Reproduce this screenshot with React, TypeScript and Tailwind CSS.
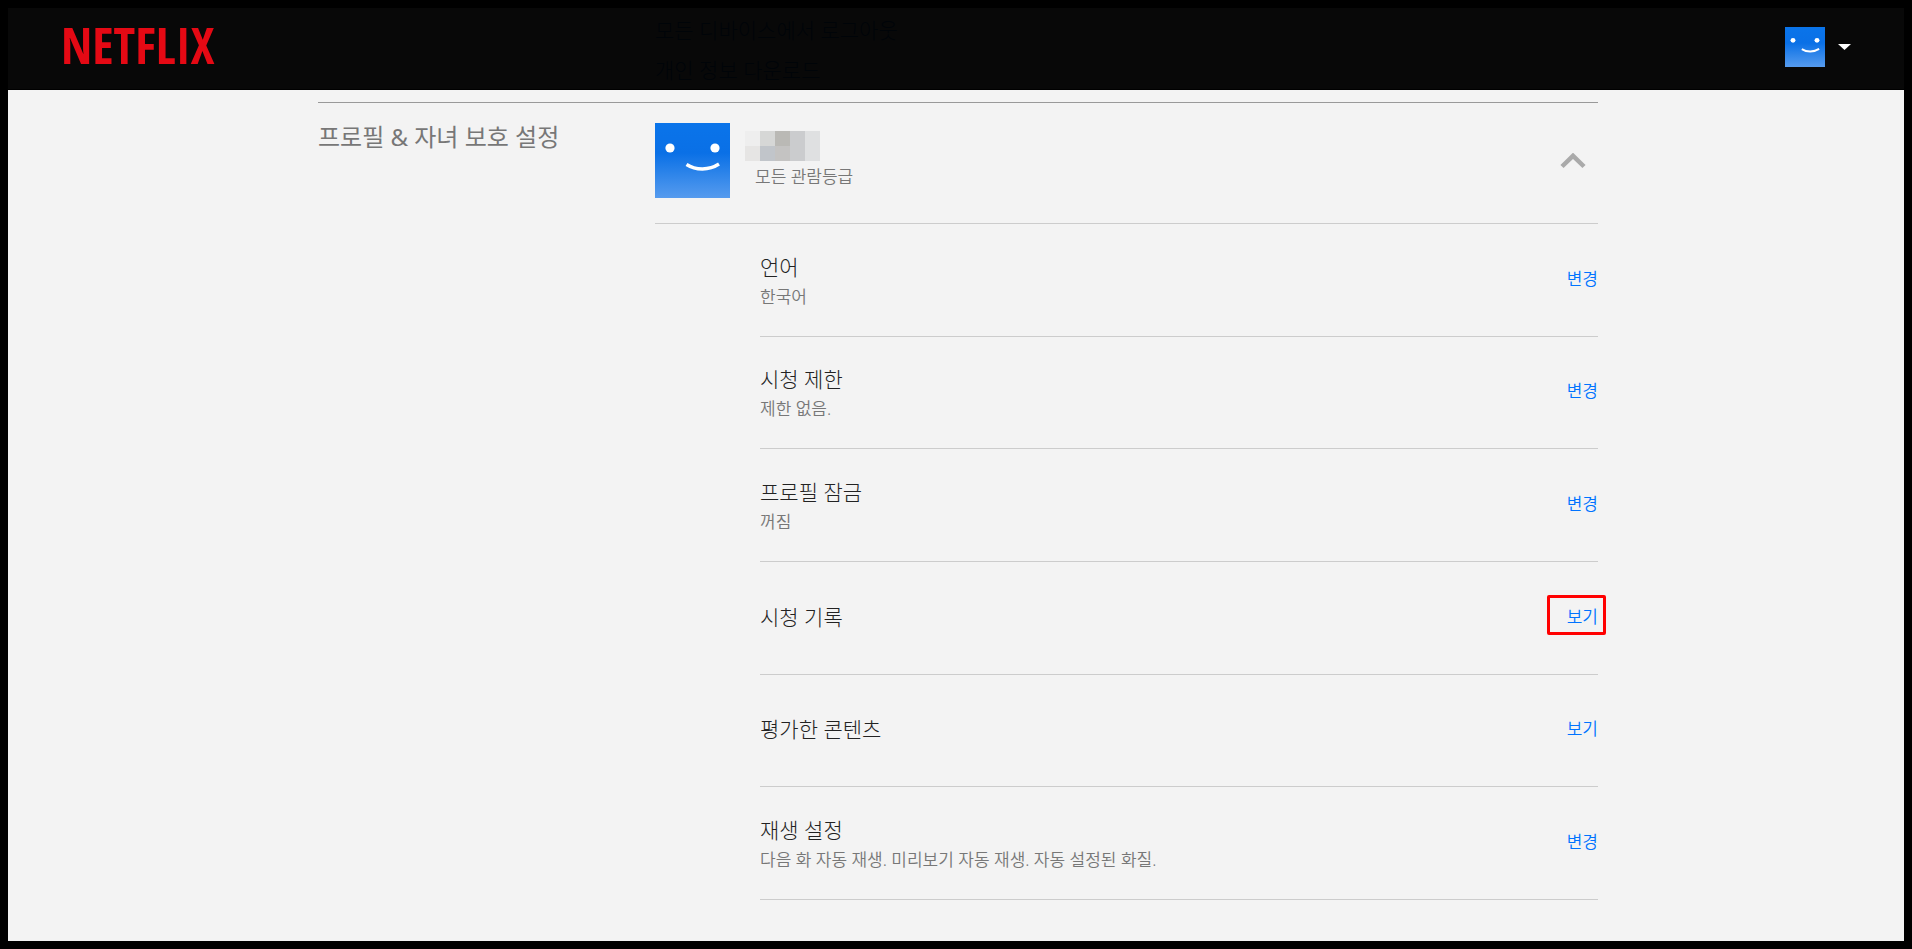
import React from 'react';
import { clsx } from 'clsx';

interface Setting {
  title: string;
  description?: string;
  action: string;
  highlighted?: boolean;
}

const settings: Setting[] = [
  { title: '언어', description: '한국어', action: '변경' },
  { title: '시청 제한', description: '제한 없음.', action: '변경' },
  { title: '프로필 잠금', description: '꺼짐', action: '변경' },
  { title: '시청 기록', action: '보기', highlighted: true },
  { title: '평가한 콘텐츠', action: '보기' },
  {
    title: '재생 설정',
    description: '다음 화 자동 재생. 미리보기 자동 재생. 자동 설정된 화질.',
    action: '변경',
  },
];

function Avatar({ id, className }: { id: string; className?: string }) {
  return (
    <svg viewBox="0 0 75 75" className={className} aria-hidden="true">
      <defs>
        <linearGradient id={id} x1="0" y1="0" x2="0" y2="1">
          <stop offset="0" stopColor="#0a74ea" />
          <stop offset="0.4" stopColor="#0a70e6" />
          <stop offset="0.7" stopColor="#3086ea" />
          <stop offset="1" stopColor="#569bee" />
        </linearGradient>
      </defs>
      <rect width="75" height="75" fill={`url(#${id})`} />
      <circle cx="15" cy="25" r="4.6" fill="#fff" />
      <circle cx="60" cy="25" r="4.6" fill="#fff" />
      <path d="M31.5 41.5C41 47.5 54 47.5 64 41" fill="none" stroke="#fff" strokeWidth="3.4" />
    </svg>
  );
}

function Header() {
  return (
    <header className="absolute inset-x-0 top-0 flex h-[82px] items-center justify-between border-b border-black bg-black/97 pr-[53px] pb-1 pl-[53px]">
      <a
        href="#home"
        className="pb-1 font-['Open_Sans_Condensed','Roboto_Condensed','Liberation_Sans_Narrow',sans-serif] text-[50px] leading-10 font-bold text-[#e50914]"
      >
        NETFLIX
      </a>
      <button className="flex items-center gap-[13px]" aria-label="계정">
        <Avatar id="avatar-small" className="size-10" />
        <svg viewBox="0 0 13 6" className="h-[6px] w-[13px]" aria-hidden="true">
          <path d="M0 0H13L6.5 6Z" fill="#fff" />
        </svg>
      </button>
    </header>
  );
}

// Pixelated profile name
function HiddenName() {
  return (
    <div className="grid w-[75px] grid-cols-5">
      <span className="h-[15px] bg-[#eeeeee]" />
      <span className="h-[15px] bg-[#d6d7d6]" />
      <span className="h-[15px] bg-[#bab9b5]" />
      <span className="h-[15px] bg-[#cbccce]" />
      <span className="h-[15px] bg-[#dfe0e1]" />
      <span className="h-[15px] bg-[#e6e5e4]" />
      <span className="h-[15px] bg-[#c1c5ca]" />
      <span className="h-[15px] bg-[#c4c3c2]" />
      <span className="h-[15px] bg-[#cbccce]" />
      <span className="h-[15px] bg-[#dfe0e1]" />
    </div>
  );
}

function SettingRow({ title, description, action, highlighted }: Setting) {
  return (
    <li className="flex items-center justify-between border-b border-[#ccc] pb-[2px]">
      <div className={clsx(description && 'pt-[6px]')}>
        <h3 className="text-[21px] leading-[30px] text-[#222]">{title}</h3>
        {description && (
          <p className="text-[17px] leading-[30px] font-[350] text-[#777]">{description}</p>
        )}
      </div>
      <a
        href="#setting"
        className={clsx('text-[17px] leading-6 font-[350] text-[#0073ff]', highlighted && 'relative')}
      >
        {action}
        {highlighted && (
          <span className="absolute -top-[10px] -right-2 h-10 w-[59px] rounded-xs border-3 border-[#f00]" />
        )}
      </a>
    </li>
  );
}

export default function App() {
  return (
    <div className="min-h-screen border-8 border-black bg-[#f3f3f3] font-['Noto_Sans','Noto_Sans_CJK_KR',sans-serif] font-light">
      <div className="relative">
        <main className="pt-[2px] pl-1">
          <div className="mx-auto max-w-[1280px]">
            <div className="mb-3 flex flex-col items-start pl-[337px] text-[21px] leading-10 text-[#0073e6]">
              <a href="#logout">모든 디바이스에서 로그아웃</a>
              <a href="#download">개인 정보 다운로드</a>
            </div>

            <section className="flex border-t border-[#999]">
              <h2 className="w-[337px] shrink-0 pt-4 text-[24px] leading-9 font-normal text-[#777]">
                프로필 &amp; 자녀 보호 설정
              </h2>
              <div className="grow">
                <div className="flex items-center justify-between border-b border-[#ccc] pt-5 pb-[25px]">
                  <div className="flex gap-[15px]">
                    <Avatar id="avatar-large" className="size-[75px]" />
                    <div className="pt-2">
                      <HiddenName />
                      <p className="pt-1 pl-[10px] text-[17px] leading-6 font-[350] text-[#777]">
                        모든 관람등급
                      </p>
                    </div>
                  </div>
                  <button className="pr-3" aria-label="접기">
                    <svg viewBox="0 0 26 16" className="h-4 w-[26px]" aria-hidden="true">
                      <path d="M2 13.5L13 2.8L24 13.5" fill="none" stroke="#aaa" strokeWidth="4.5" />
                    </svg>
                  </button>
                </div>
                <ul className="ml-[105px] grid min-h-[676px] grid-rows-6">
                  {settings.map((setting) => (
                    <SettingRow key={setting.title} {...setting} />
                  ))}
                </ul>
              </div>
            </section>
          </div>
        </main>
        <Header />
      </div>
    </div>
  );
}
